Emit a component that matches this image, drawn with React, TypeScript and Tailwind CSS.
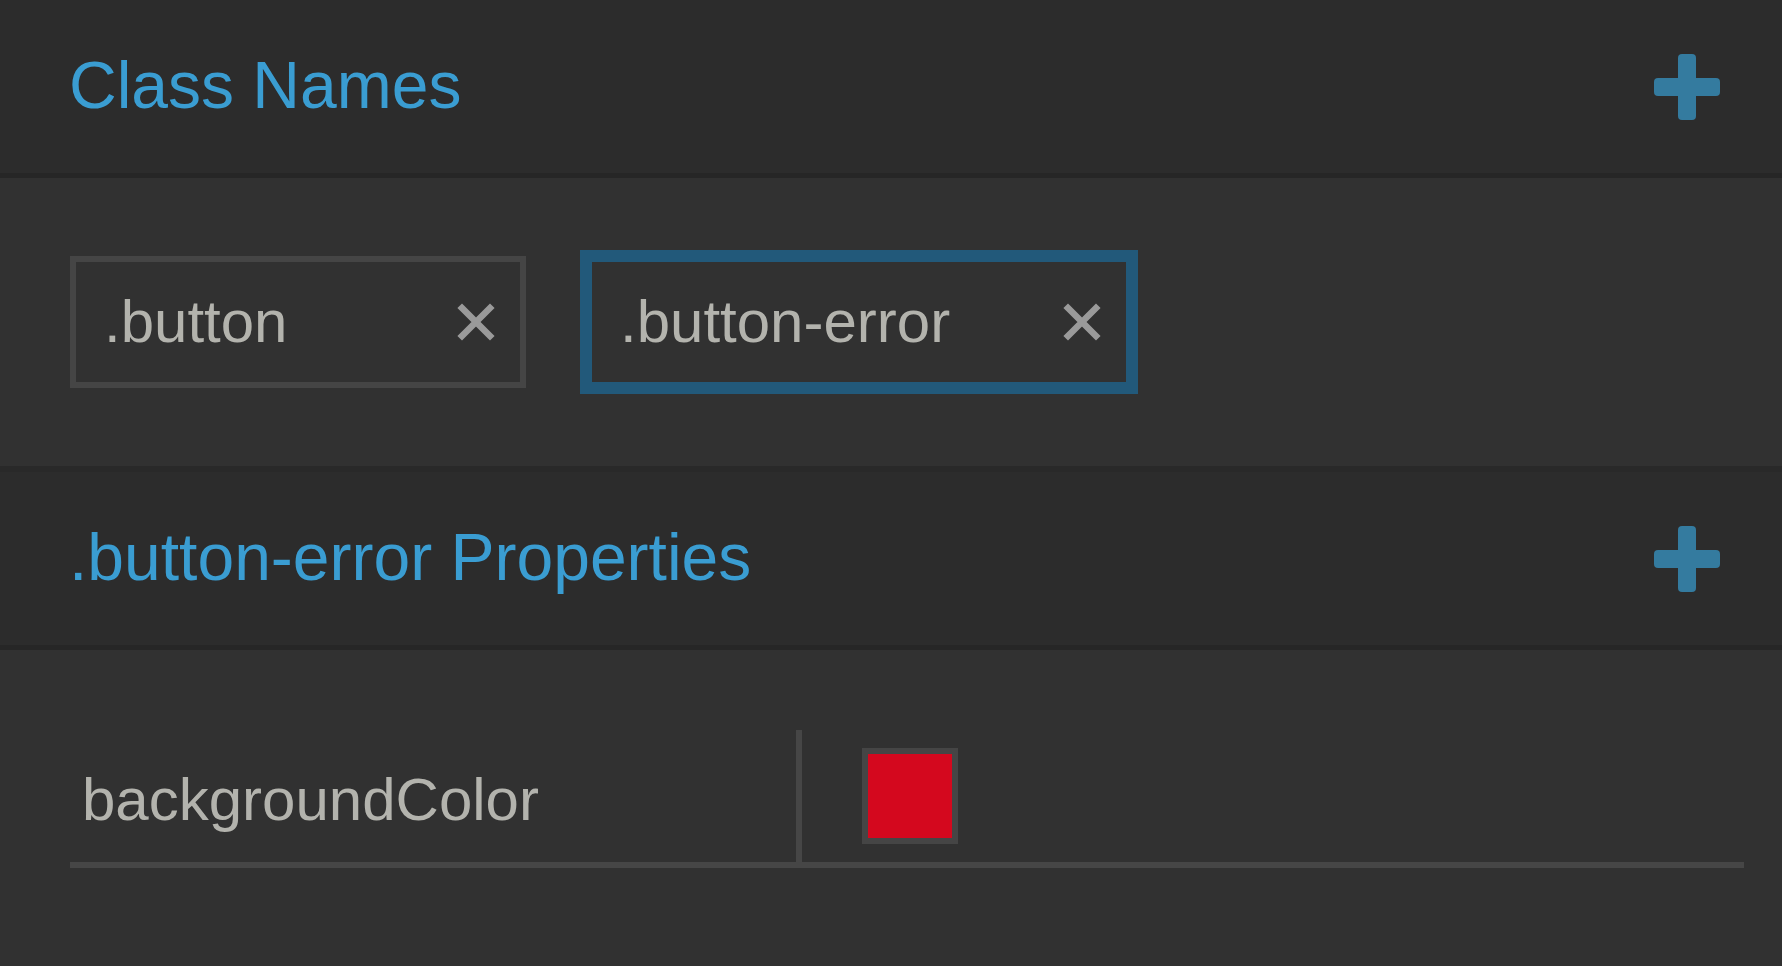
import React from "react";

type HeaderProps = {
  title: string;
};

function PlusIcon() {
  return (
    <svg width="66" height="66" viewBox="0 0 66 66" className="shrink-0">
      <rect x="24" y="0" width="18" height="66" rx="4" fill="#347b9f" />
      <rect x="0" y="24" width="66" height="18" rx="4" fill="#347b9f" />
    </svg>
  );
}

function CloseIcon() {
  return (
    <svg width="38" height="38" viewBox="0 0 38 38" className="shrink-0">
      <path
        d="M5 5 L33 33 M33 5 L5 33"
        stroke="#9a9a9a"
        strokeWidth="6.5"
        strokeLinecap="square"
        fill="none"
      />
    </svg>
  );
}

function SectionHeader({ title }: HeaderProps) {
  return (
    <div className="flex h-[178px] items-center justify-between border-b-[5px] border-[#262626] bg-[#2c2c2c] pl-[69px] pr-[62px]">
      <h2 className="pb-[3px] text-[66px] leading-none font-normal text-[#3a9dd2]">
        {title}
      </h2>
      <PlusIcon />
    </div>
  );
}

function ClassChip({
  name,
  selected,
}: {
  name: string;
  selected?: boolean;
}) {
  return (
    <div
      className={`${
        selected
          ? "w-[546px] border-[#22597a] outline-[6px] outline-solid outline-[#22597a]"
          : "w-[456px] border-[#454545]"
      } flex h-[132px] shrink-0 items-center justify-between border-[6px] pl-[28px] pr-[25px]`}
    >
      <span className="text-[60px] text-[#b3b3ad]">{name}</span>
      <CloseIcon />
    </div>
  );
}

export default function App() {
  return (
    <div className="min-h-screen w-full bg-[#313131] font-['Liberation_Sans',Arial,sans-serif]">
      <SectionHeader title="Class Names" />

      {/* class chips */}
      <div className="flex items-center gap-[60px] border-b-[6px] border-[#292929] px-[70px] py-[78px]">
        <ClassChip name=".button" />
        <ClassChip name=".button-error" selected />
      </div>

      <SectionHeader title=".button-error Properties" />

      {/* properties */}
      <div className="pl-[70px] pr-[38px] pt-[80px]">
        <div className="flex h-[138px] border-b-[6px] border-[#464646]">
          <div className="flex w-[726px] items-center pl-[12px] pt-[8px]">
            <span className="text-[60px] text-[#b3b3ad]">backgroundColor</span>
          </div>
          <div className="w-[6px] bg-[#464646]" />
          <div className="flex flex-1 items-center pl-[60px]">
            <div className="h-[96px] w-[96px] border-[6px] border-[#454545] bg-[#d4081e]" />
          </div>
        </div>
      </div>
    </div>
  );
}
